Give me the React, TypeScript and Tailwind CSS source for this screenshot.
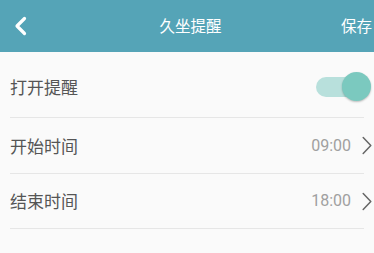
import { useState } from "react";

function ChevronLeft() {
  return (
    <svg width="14" height="20" viewBox="0 0 14 20" fill="none">
      <path d="M11.5 2.5 L4 10 L11.5 17.5" stroke="white" strokeWidth="3.2" strokeLinecap="round" strokeLinejoin="round" />
    </svg>
  );
}

function ChevronRight() {
  return (
    <svg width="10" height="19" viewBox="0 0 10 19" fill="none">
      <path d="M1.2 1.5 L8.8 9.5 L1.2 17.5" stroke="#666666" strokeWidth="1.5" strokeLinecap="round" strokeLinejoin="round" />
    </svg>
  );
}

function Toggle({ on, onChange }: { on: boolean; onChange: (v: boolean) => void }) {
  return (
    <button onClick={() => onChange(!on)} className="relative w-[55px] h-[30px] flex items-center">
      <span className={`absolute left-0 right-[4px] h-[20px] rounded-full ${on ? "bg-[#b8e0dc]" : "bg-[#dddddd]"}`}></span>
      <span
        className={`absolute top-0 w-[29px] h-[29px] rounded-full shadow-[0_1px_2px_rgba(0,0,0,0.25)] ${
          on ? "right-0 bg-[#7bc9bf]" : "left-0 bg-[#f1f1f1]"
        }`}
      ></span>
    </button>
  );
}

function TimeRow({ label, value, h }: { label: string; value: string; h: string }) {
  return (
    <div className={`${h} flex items-center justify-between border-b border-[#e6e6e6]`}>
      <span className="text-[17px] text-[#555555]">{label}</span>
      <div className="flex items-center gap-[11px] -mr-[8px]">
        <span className="font-['Roboto',sans-serif] text-[16px] text-[#a0a0a0]">{value}</span>
        <ChevronRight />
      </div>
    </div>
  );
}

export default function App() {
  const [enabled, setEnabled] = useState(true);

  return (
    <div className="w-[374px] h-[253px] bg-[#fafafa] font-['Noto_Sans_CJK_SC','Noto_Sans',sans-serif] overflow-hidden">
      <div className="h-[52px] bg-[#55a4b7] flex items-center text-white">
        <div className="w-[40px] pl-[13px] flex items-center">
          <ChevronLeft />
        </div>
        <div className="flex-1 text-center text-[15.5px]">久坐提醒</div>
        <div className="pr-[2px] text-[15.5px]">保存</div>
      </div>

      <div className="px-[10px] mt-[5px]">
        <div className="h-[61px] flex items-center justify-between border-b border-[#e6e6e6]">
          <span className="text-[17px] text-[#555555]">打开提醒</span>
          <div className="-mr-[7px]">
            <Toggle on={enabled} onChange={setEnabled} />
          </div>
        </div>
        <TimeRow label="开始时间" value="09:00" h="h-[56px]" />
        <TimeRow label="结束时间" value="18:00" h="h-[55px]" />
      </div>
    </div>
  );
}
